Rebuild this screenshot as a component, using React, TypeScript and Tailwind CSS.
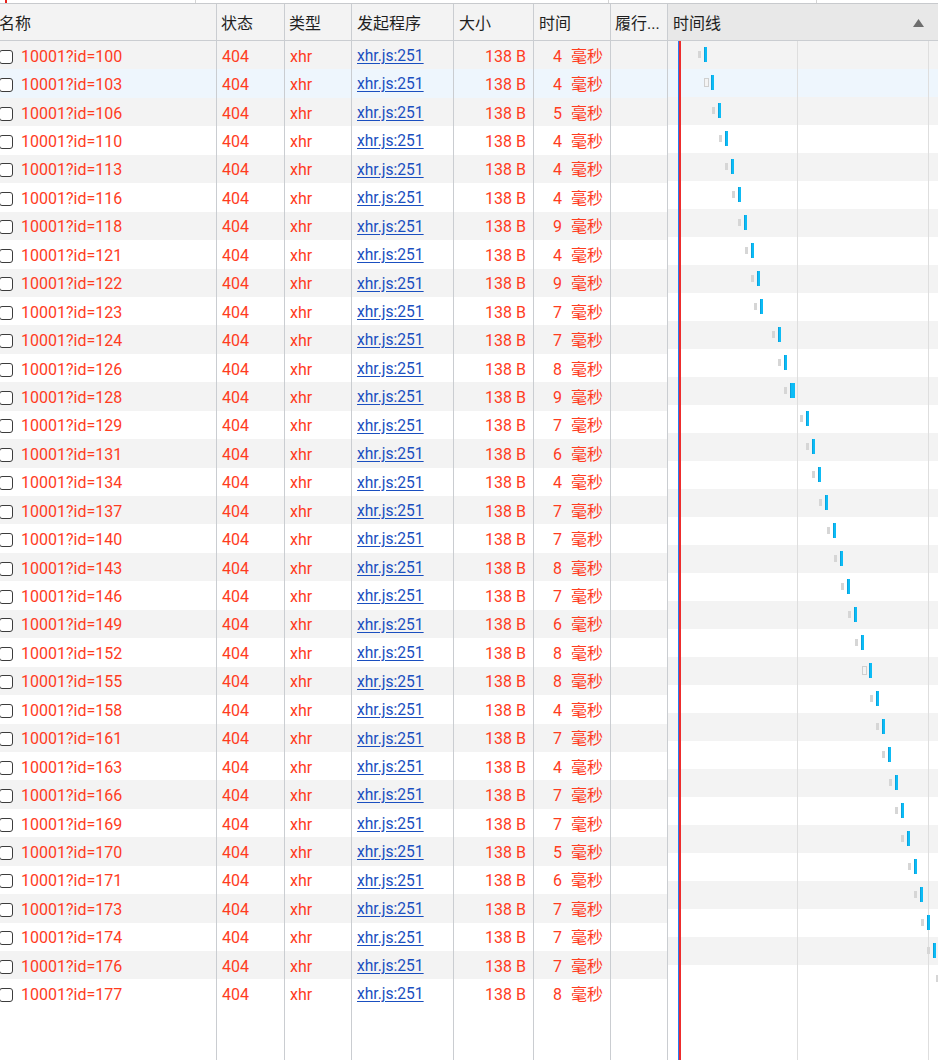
import { Fragment } from "react";

type Req = { id: number; ms: number; bar: number; wide?: boolean; ghost?: boolean };

// x of the blue bar on the page, per row
const REQS: Req[] = [
    { id: 100, ms: 4, bar: 704 },
    { id: 103, ms: 4, bar: 711, ghost: true },
    { id: 106, ms: 5, bar: 718 },
    { id: 110, ms: 4, bar: 725 },
    { id: 113, ms: 4, bar: 731 },
    { id: 116, ms: 4, bar: 738 },
    { id: 118, ms: 9, bar: 744 },
    { id: 121, ms: 4, bar: 751 },
    { id: 122, ms: 9, bar: 757 },
    { id: 123, ms: 7, bar: 760 },
    { id: 124, ms: 7, bar: 778 },
    { id: 126, ms: 8, bar: 784 },
    { id: 128, ms: 9, bar: 790, wide: true },
    { id: 129, ms: 7, bar: 806 },
    { id: 131, ms: 6, bar: 812 },
    { id: 134, ms: 4, bar: 818 },
    { id: 137, ms: 7, bar: 825 },
    { id: 140, ms: 7, bar: 833 },
    { id: 143, ms: 8, bar: 840 },
    { id: 146, ms: 7, bar: 847 },
    { id: 149, ms: 6, bar: 854 },
    { id: 152, ms: 8, bar: 861 },
    { id: 155, ms: 8, bar: 869, ghost: true },
    { id: 158, ms: 4, bar: 876 },
    { id: 161, ms: 7, bar: 882 },
    { id: 163, ms: 4, bar: 888 },
    { id: 166, ms: 7, bar: 895 },
    { id: 169, ms: 7, bar: 901 },
    { id: 170, ms: 5, bar: 907 },
    { id: 171, ms: 6, bar: 914 },
    { id: 173, ms: 7, bar: 920 },
    { id: 174, ms: 7, bar: 927 },
    { id: 176, ms: 7, bar: 933 },
    { id: 177, ms: 8, bar: 942 },
];

const HOVER = 1;
const TL_LEFT = 668;

const cols = "grid grid-cols-[217px_68px_67px_102px_80px_77px_57px]";
const cell = "border-r border-[#cacdd1] flex items-center min-w-0";
const bodyCell = `${cell} pt-[3px]`;

const rowBg = (i: number) => (i === HOVER ? "bg-[#eef6fd]" : i % 2 === 0 ? "bg-[#f3f3f3]" : "bg-white");

export default function App() {
    return (
        <div className="w-[938px] h-[1060px] overflow-hidden bg-white flex flex-col text-[16px] text-[#1f1f1f] [font-family:Roboto,'Noto_Sans_CJK_SC',sans-serif]">
            {/* strip left over from the toolbar above */}
            <div className="relative h-[3px] shrink-0">
                <span className="absolute left-[5px] top-0 h-[3px] w-[2px] bg-[#e8221b]" />
                <span className="absolute left-[195px] top-0 h-[3px] w-px bg-[#d4d4d4]" />
                <span className="absolute left-[608px] top-0 h-[3px] w-px bg-[#d4d4d4]" />
                <span className="absolute left-[816px] top-0 h-[3px] w-px bg-[#d4d4d4]" />
            </div>
            <div className="h-px shrink-0 bg-[#c8cacd]" />

            <div className="flex flex-1 min-h-0">
                {/* request table */}
                <div className="w-[668px] shrink-0 flex flex-col">
                    <div className={`${cols} h-[37px] shrink-0 bg-[#f3f3f3] border-b border-[#cacdd1]`}>
                        <div className={`${cell} pt-[4px]`}><span className="-ml-[1px]">名称</span></div>
                        <div className={`${cell} pt-[4px] pl-[4px]`}>状态</div>
                        <div className={`${cell} pt-[4px] pl-[4px]`}>类型</div>
                        <div className={`${cell} pt-[4px] pl-[5px]`}>发起程序</div>
                        <div className={`${cell} pt-[4px] pl-[5px]`}>大小</div>
                        <div className={`${cell} pt-[4px] pl-[5px]`}>时间</div>
                        <div className={`${cell} pt-[4px] pl-[4px] whitespace-nowrap overflow-hidden`}>履行...</div>
                    </div>

                    {REQS.map((r, i) => (
                        <div key={r.id} className={`${cols} h-[28.45px] shrink-0 text-[#ff3c1e] ${rowBg(i)}`}>
                            <div className={`${bodyCell} gap-[8px]`}>
                                <span className="-ml-[1px] w-[14px] h-[14px] shrink-0 rounded-[3px] border-[1.5px] border-[#3c3c3c] bg-white" />
                                <span className="whitespace-nowrap">10001?id={r.id}</span>
                            </div>
                            <div className={`${bodyCell} pl-[5px]`}>404</div>
                            <div className={`${bodyCell} pl-[5px]`}>xhr</div>
                            <div className={`${bodyCell} pl-[5px]`}>
                                <span className="text-[15.6px] text-[#1a4fc0] underline underline-offset-[2px]">xhr.js:251</span>
                            </div>
                            <div className={`${bodyCell} justify-end pr-[7px] whitespace-nowrap`}>138 B</div>
                            <div className={`${bodyCell} justify-end pr-[7px] whitespace-nowrap`}>
                                {r.ms}
                                <span className="ml-[9px]">毫秒</span>
                            </div>
                            <div className={cell} />
                        </div>
                    ))}

                    <div className={`${cols} flex-1`}>
                        {[0, 1, 2, 3, 4, 5, 6].map((k) => (
                            <Fragment key={k}>
                                <div className={cell} />
                            </Fragment>
                        ))}
                    </div>
                </div>

                {/* waterfall */}
                <div className="flex-1 flex flex-col min-w-0">
                    <div className="h-[37px] shrink-0 bg-[#e8e8e8] border-b border-[#cacdd1] flex items-center justify-between pt-[4px] pl-[5px] pr-[14px]">
                        <span>时间线</span>
                        <svg width="11" height="8" viewBox="0 0 11 8" className="-mt-[3px]">
                            <polygon points="5.5,0 11,8 0,8" fill="#6e6e6e" />
                        </svg>
                    </div>
                    <div className="relative flex-1">
                        {REQS.map((r, i) => (
                            <div key={r.id} className={`relative h-[28px] ${rowBg(i)}`}>
                                {r.ghost ? (
                                    <span
                                        className="absolute top-[9px] h-[9px] w-[5px] border border-[#cfcfcf] bg-[#f4f4f4] z-10"
                                        style={{ left: r.bar - TL_LEFT - 7 }}
                                    />
                                ) : (
                                    <span
                                        className="absolute top-[10px] h-[7px] w-[3px] bg-[#d6d6d6] z-10"
                                        style={{ left: r.bar - TL_LEFT - 6 }}
                                    />
                                )}
                                <span
                                    className={`absolute top-[6px] h-[15px] ${r.wide ? "w-[5px]" : "w-[3px]"} bg-[#0cbcf6] shadow-[inset_1px_0_0_#0aa2dc] z-10`}
                                    style={{ left: r.bar - TL_LEFT }}
                                />
                            </div>
                        ))}
                        <span className="absolute left-[129px] top-0 bottom-0 w-px bg-[#dedede] z-[1]" />
                        <span className="absolute left-[260px] top-0 bottom-0 w-px bg-[#dedede] z-[1]" />
                        <span className="absolute left-[10px] top-0 bottom-0 w-px bg-[#2a7cf0] z-20" />
                        <span className="absolute left-[11px] top-0 bottom-0 w-[2px] bg-[#ee2c2c] z-20" />
                    </div>
                </div>
            </div>
        </div>
    );
}
